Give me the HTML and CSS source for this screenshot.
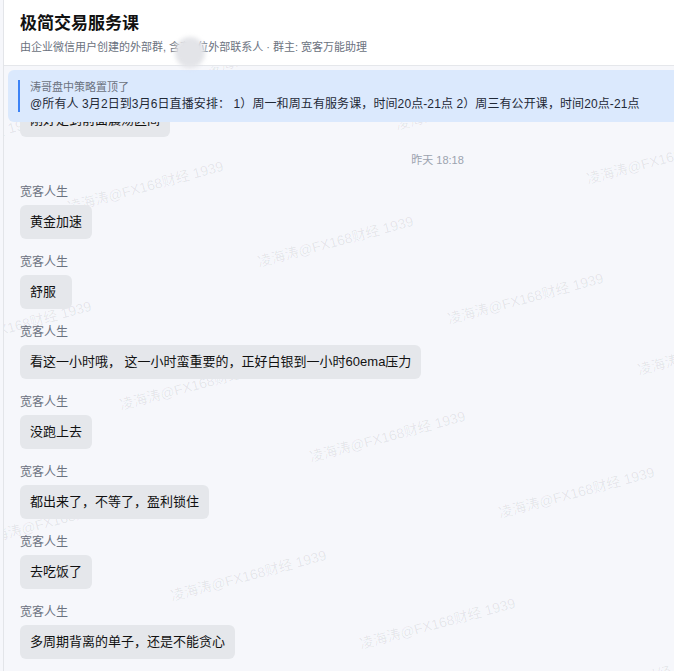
FILE: index.html
```html
<!DOCTYPE html>
<html lang="zh-CN">

<head>
    <meta charset="UTF-8">
    <meta name="viewport" content="width=device-width, initial-scale=1.0">
    <title>极简交易服务课</title>
    <link rel="stylesheet" href="styles.css">
</head>

<body>
    <div class="app">
        <div class="watermarks">
            <span class="wm wm-a">凌海涛@FX168财经 1939</span>
            <span class="wm wm-b">凌海涛@FX168财经 1939</span>
            <span class="wm wm-c">凌海涛@FX168财经 1939</span>
            <span class="wm wm-d">凌海涛@FX168财经 1939</span>
            <span class="wm wm-e">凌海涛@FX168财经 1939</span>
            <span class="wm wm-f">凌海涛@FX168财经 1939</span>
            <span class="wm wm-g">凌海涛@FX168财经 1939</span>
            <span class="wm wm-h">凌海涛@FX168财经 1939</span>
            <span class="wm wm-i">凌海涛@FX168财经 1939</span>
            <span class="wm wm-j">凌海涛@FX168财经 1939</span>
            <span class="wm wm-k">凌海涛@FX168财经 1939</span>
            <span class="wm wm-l">凌海涛@FX168财经 1939</span>
            <span class="wm wm-m">凌海涛@FX168财经 1939</span>
            <span class="wm wm-n">凌海涛@FX168财经 1939</span>
            <span class="wm wm-o">凌海涛@FX168财经 1939</span>
            <span class="wm wm-p">凌海涛@FX168财经 1939</span>
        </div>

        <header class="header">
            <h1 class="title">极简交易服务课</h1>
            <p class="subtitle">由企业微信用户创建的外部群, 含有2位外部联系人 · 群主: 宽客万能助理</p>
            <span class="blur-mask"></span>
        </header>

        <main class="chat">
            <div class="pinned">
                <div class="pinned-inner">
                    <div class="pinned-from">涛哥盘中策略置顶了</div>
                    <div class="pinned-text">@所有人 3月2日到3月6日直播安排： 1）周一和周五有服务课，时间20点-21点 2）周三有公开课，时间20点-21点</div>
                </div>
            </div>

            <div class="messages">
                <div class="msg">
                    <div class="sender">宽客人生</div>
                    <div class="bubble">刚好走到前面震荡区间</div>
                </div>

                <div class="time">昨天 18:18</div>

                <div class="msg">
                    <div class="sender">宽客人生</div>
                    <div class="bubble">黄金加速</div>
                </div>
                <div class="msg">
                    <div class="sender">宽客人生</div>
                    <div class="bubble">舒服</div>
                </div>
                <div class="msg">
                    <div class="sender">宽客人生</div>
                    <div class="bubble">看这一小时哦， 这一小时蛮重要的，正好白银到一小时60ema压力</div>
                </div>
                <div class="msg">
                    <div class="sender">宽客人生</div>
                    <div class="bubble">没跑上去</div>
                </div>
                <div class="msg">
                    <div class="sender">宽客人生</div>
                    <div class="bubble">都出来了，不等了，盈利锁住</div>
                </div>
                <div class="msg">
                    <div class="sender">宽客人生</div>
                    <div class="bubble">去吃饭了</div>
                </div>
                <div class="msg">
                    <div class="sender">宽客人生</div>
                    <div class="bubble">多周期背离的单子，还是不能贪心</div>
                </div>
            </div>
        </main>
    </div>
</body>

</html>
```

FILE: styles.css
```css
html,
body {
    margin: 0;
    height: 100%;
    overflow: hidden;
}

body {
    background: #f6f7fb;
    font-family: "Liberation Sans", "Noto Sans CJK SC", sans-serif;
}

.app {
    position: relative;
    width: 867px;
    height: 100vh;
    margin-left: 3px;
    border-left: 1px solid #e3e5e9;
    background: #f6f7fb;
    display: flex;
    flex-direction: column;
}

/* watermark layer, sits under the messages */
.watermarks {
    position: absolute;
    inset: 0;
    z-index: 0;
    overflow: hidden;
    pointer-events: none;
}

.wm {
    position: absolute;
    font-size: 14px;
    line-height: 16px;
    color: rgba(0, 0, 0, 0.08);
    white-space: nowrap;
    transform: rotate(-15deg);
    transform-origin: 0 100%;
}

.wm-a { left: -119px; top: 154px; }
.wm-b { left: 66px; top: 199px; }
.wm-c { left: 256px; top: 254px; }
.wm-d { left: 446px; top: 311px; }
.wm-e { left: 636px; top: 362px; }
.wm-f { left: -66px; top: 339px; }
.wm-g { left: 118px; top: 397px; }
.wm-h { left: 308px; top: 449px; }
.wm-i { left: 497px; top: 505px; }
.wm-j { left: -21px; top: 532px; }
.wm-k { left: 169px; top: 588px; }
.wm-l { left: 358px; top: 636px; }
.wm-m { left: 548px; top: 695px; }
.wm-n { left: 394px; top: 117px; }
.wm-o { left: 585px; top: 171px; }
.wm-p { left: 205px; top: 61px; }

.header {
    position: relative;
    z-index: 2;
    background: #fff;
    padding: 12px 16px 10px;
    border-bottom: 1px solid #e5e7eb;
}

.title {
    margin: 0;
    font-size: 17px;
    line-height: 23px;
    font-weight: 700;
    color: #111;
}

.subtitle {
    margin: 4px 0 0;
    font-size: 11px;
    line-height: 16px;
    color: #6b7280;
}

.blur-mask {
    position: absolute;
    left: 171px;
    top: 37px;
    width: 30px;
    height: 31px;
    border-radius: 50%;
    background: #e3e4e8;
    filter: blur(2px);
}

.chat {
    position: relative;
    z-index: 1;
    flex: 1;
    overflow: hidden;
}

.pinned {
    position: absolute;
    top: 4px;
    left: 4px;
    right: 4px;
    z-index: 2;
    padding: 10px;
    background: #dbe9fd;
    border-radius: 6px;
}

.pinned-inner {
    border-left: 2px solid #3b82f6;
    padding-left: 10px;
}

.pinned-from {
    font-size: 11px;
    line-height: 15px;
    color: #6b7280;
    margin-bottom: 1px;
}

.pinned-text {
    font-size: 12px;
    line-height: 16px;
    letter-spacing: 0.1px;
    color: #1f2937;
    white-space: nowrap;
}

.messages {
    padding: 16px 16px 0;
}

.msg {
    display: flex;
    flex-direction: column;
    align-items: flex-start;
    margin-bottom: 15px;
}

.sender {
    font-size: 12px;
    line-height: 17px;
    color: #6b7280;
    margin-bottom: 4px;
}

.bubble {
    box-sizing: border-box;
    min-width: 52px;
    padding: 8px 10px;
    background: #e5e7eb;
    border-radius: 6px;
    font-size: 13px;
    line-height: 18px;
    color: #111;
}

.time {
    text-align: center;
    font-size: 11px;
    line-height: 17px;
    color: #9ca3af;
    margin-bottom: 15px;
}
```
